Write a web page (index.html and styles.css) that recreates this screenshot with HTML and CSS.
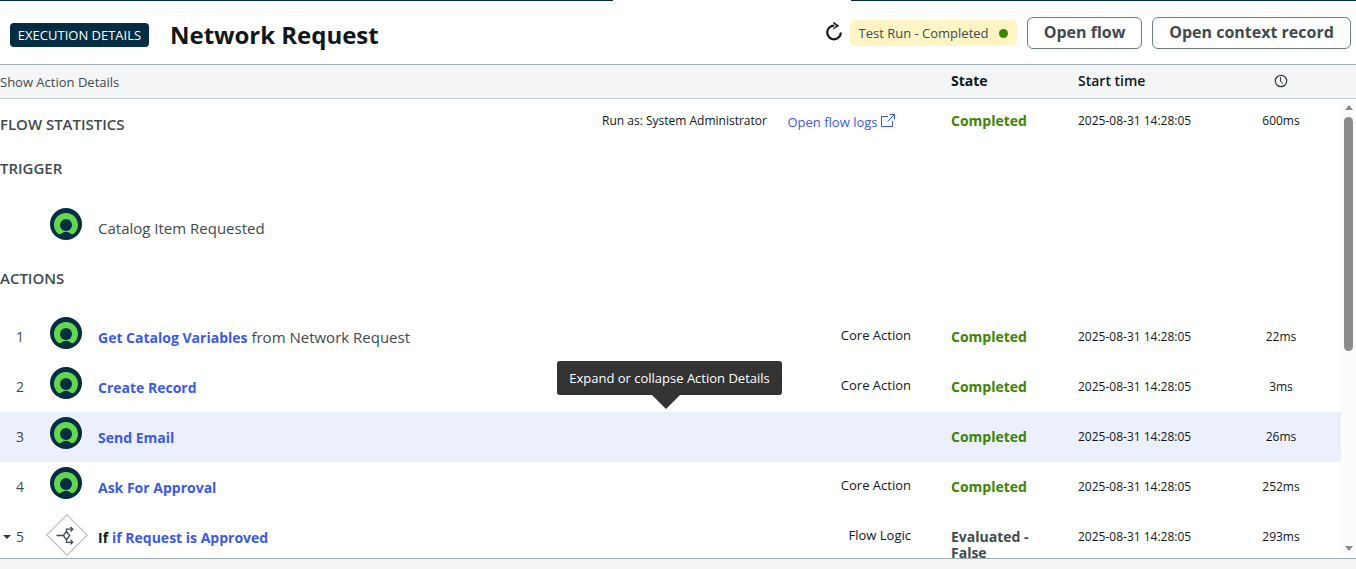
FILE: index.html
```html
<!DOCTYPE html>
<html lang="en">
<head>
<meta charset="utf-8">
<title>Execution Details</title>
<link rel="stylesheet" href="styles.css">
</head>
<body>
<svg class="defs" width="0" height="0" aria-hidden="true">
  <symbol id="logo" viewBox="0 0 32 32">
    <circle cx="16" cy="16" r="16" fill="#032d42"/>
    <path d="M16 5C9.200 5 4 10.200 4 16.900c0 3.300 1.500 6.400 3.900 8.600.9.800 2.200.9 3.200.2a8 8 0 0 1 9.800 0c1 .7 2.300.6 3.200-.2 2.400-2.200 3.900-5.300 3.900-8.600C28 10.200 22.800 5 16 5Z" fill="#62d84e"/>
    <circle cx="16" cy="17" r="6" fill="#032d42"/>
  </symbol>
</svg>
<div class="page">
  <div class="strip"><span class="strip-left"></span><span class="strip-right"></span></div>
  <header class="header">
    <span class="badge">EXECUTION DETAILS</span>
    <h1 class="title">Network Request</h1>
    <div class="tools">
      <svg class="refresh" width="18" height="20" viewBox="0 0 18 20"><path d="M9.300 3.700A6.800 6.800 0 1 0 15.800 10.500" fill="none" stroke="#10171c" stroke-width="2.200"/><path d="M8.500 0v1.300l3 2.500-3 2.500v.7L14 3.800Z" fill="#10171c" stroke="#10171c" stroke-width=".5"/></svg>
      <span class="status">Test Run - Completed<i class="dot"></i></span>
      <button class="btn btn-flow">Open flow</button>
      <button class="btn btn-record">Open context record</button>
    </div>
  </header>
  <div class="grid thead">
    <span class="toggle">Show Action Details</span>
    <span class="th state-head">State</span>
    <span class="th start-head">Start time</span>
    <span class="clock"><svg width="14" height="14" viewBox="0 0 14 14" fill="none" stroke="#303a3f"><circle cx="7" cy="7" r="5.700" stroke-width="1.200"/><path d="M6.500 3v4.500L9 9.500"/></svg></span>
  </div>
  <main class="body">
    <div class="list">
      <div class="grid stats">
        <h2 class="section">FLOW STATISTICS</h2>
        <span class="runas">Run as: System Administrator</span>
        <a class="logs">Open flow logs<svg width="14" height="14" viewBox="0 0 14 14" fill="none" stroke="#3c59e7"><path d="M7 2.500H.5v10h11V7M8.500.5h5v5M13.500.5l-7 7"/></svg></a>
        <span class="state">Completed</span><span class="time">2025-08-31 14:28:05</span><span class="dur">600ms</span>
      </div>
      <h2 class="section trigger">TRIGGER</h2>
      <div class="grid row trigger-row"><span></span><svg class="logo"><use href="#logo"/></svg><span class="name">Catalog Item Requested</span></div>
      <h2 class="section actions">ACTIONS</h2>
      <div class="grid row"><span class="num">1</span><svg class="logo"><use href="#logo"/></svg><span class="name"><b>Get Catalog Variables</b> <span class="from">from Network Request</span></span><span class="type">Core Action</span><span class="state">Completed</span><span class="time">2025-08-31 14:28:05</span><span class="dur">22ms</span></div>
      <div class="grid row"><span class="num">2</span><svg class="logo"><use href="#logo"/></svg><span class="name"><b>Create Record</b></span><span class="type">Core Action</span><span class="state">Completed</span><span class="time">2025-08-31 14:28:05</span><span class="dur">3ms</span></div>
      <div class="grid row hover"><span class="num">3</span><svg class="logo"><use href="#logo"/></svg><span class="name"><b>Send Email</b></span><span class="type"></span><span class="state">Completed</span><span class="time">2025-08-31 14:28:05</span><span class="dur">26ms</span><div class="tooltip">Expand or collapse Action Details</div></div>
      <div class="grid row"><span class="num">4</span><svg class="logo"><use href="#logo"/></svg><span class="name"><b>Ask For Approval</b></span><span class="type">Core Action</span><span class="state">Completed</span><span class="time">2025-08-31 14:28:05</span><span class="dur">252ms</span></div>
      <div class="grid row"><span class="num"><i class="caret"></i>5</span>
        <svg class="branch" width="42" height="42" viewBox="0 0 42 42" fill="none"><path d="M21 .8 41.200 21 21 41.200.8 21Z" fill="#fff" stroke="#b9c1c5" stroke-width="1.200"/><g stroke="#3c4a50" stroke-width="1.300"><path d="M10.500 21.500H17M20.500 17.300l3.200 4.200-3.200 4.200-3.200-4.200ZM20.500 17.300v-2.100h6M20.500 25.700v2.600h6M24.500 13l2.300 2.200-2.300 2.300M24.500 25.900l2.300 2.300-2.300 2.200"/></g></svg>
        <span class="name"><strong>If</strong> <b>if Request is Approved</b></span><span class="type">Flow Logic</span><span class="state evaluated">Evaluated - False</span><span class="time">2025-08-31 14:28:05</span><span class="dur">293ms</span></div>
    </div>
    <div class="scrollbar"><i class="up"></i><i class="thumb"></i><i class="down"></i></div>
  </main>
</div>
</body>
</html>
```
FILE: styles.css
```css
* { box-sizing: border-box; }
body { margin: 0; background: #f4f5f7; color: #10171c; font: 13px "Open Sans", sans-serif; overflow: hidden; }
.defs { position: absolute; }
.page { width: 1356px; height: 569px; display: flex; flex-direction: column; }
.strip { height: 1px; display: flex; justify-content: space-between; background: #fff; }
.strip-left { width: 613px; background: #032d42; }
.strip-right { width: 505px; background: #032d42; }
.header { height: 64px; display: flex; align-items: flex-start; padding-left: 10px; background: #fff; border-bottom: 1px solid #a2adb3; white-space: nowrap; }
.badge { width: 139px; height: 24px; margin-top: 22px; border-radius: 4px; background: #032d42; color: #fff; font-size: 13px; line-height: 24px; text-align: center; }
.title { margin: 17px 0 0 21px; font-size: 24px; line-height: 34px; font-weight: 700; letter-spacing: -.03px; }
.tools { margin-left: auto; padding-right: 5px; display: flex; align-items: flex-start; }
.refresh { margin: 21px 7px 0 0; }
.status { width: 167px; height: 26px; margin: 19px 10px 0 0; padding: 0 9px 0 8.5px; display: flex; align-items: center; justify-content: space-between; background: #fff5c4; border-radius: 5px; color: #3f4a4f; font-size: 13px; }
.dot { width: 9px; height: 9px; border-radius: 50%; background: #3d8500; }
.btn { height: 32px; margin: 16px 0 0; padding: 0 0 2px; border: 1px solid #6b7a81; border-radius: 6px; background: #fff; color: #3f4a4f; font: 700 16px "Open Sans", sans-serif; }
.btn-flow { width: 115px; margin-right: 10px; }
.btn-record { width: 199px; }
.grid { display: grid; grid-template-columns: 50px 48px 1fr 120px 40px 127px 143px 120px; white-space: nowrap; width: 1341px; }
.thead { width: 1356px; height: 34px; padding-right: 15px; border-bottom: 1px solid #cbd2d5; background: #f4f5f7; line-height: 34px; }
.toggle { grid-column: 1 / 4; color: #3f4a4f; }
.th { font-size: 14px; line-height: 32px; }
.state-head { grid-column: 6; font-weight: 700; }
.start-head { font-weight: 600; }
.clock { display: flex; align-items: center; justify-content: center; padding-bottom: 2px; }
.body { height: 460px; display: flex; background: #fff; border-bottom: 1px solid #a2adb3; overflow: hidden; }
.list { width: 1341px; }
.stats { grid-template-columns: 602px 185px 164px 127px 143px 120px; height: 44px; line-height: 44px; }
.section { margin: 0; font-size: 15px; font-weight: 600; color: #3f4a4f; line-height: 50px; letter-spacing: -.02px; }
.runas { font-size: 12px; }
.logs { display: flex; align-items: flex-start; gap: 3px; padding-left: .5px; line-height: 47px; color: #3c59e7; }
.logs svg { margin-top: 15px; }
.state { grid-column: 6; font-size: 14px; font-weight: 700; color: #3d8500; }
.stats .state { grid-column: auto; }
.time { font-size: 12px; }
.dur { text-align: center; font-size: 12px; }
.trigger { height: 60px; }
.row { position: relative; height: 50px; line-height: 50px; }
.num { position: relative; width: 40px; text-align: center; font-size: 14px; color: #3f4a4f; }
.logo { width: 32px; height: 32px; margin-top: 5px; }
.name { font-size: 15px; line-height: 50px; color: #3f4a4f; }
.name b { font-size: 14px; font-weight: 700; color: #3c59e7; }
.name strong { font-size: 14px; color: #10171c; }
.actions { height: 59px; }
.type { text-align: right; line-height: 47px; }
.row .type { font-size: 13px; }
.hover { background: #ecf0fd; }
.evaluated { color: #3f4a4f; line-height: 16px; padding: 17px 27px 0 0; white-space: normal; }
.caret { position: absolute; left: 3px; top: 23px; border: 4px solid transparent; border-top: 4px solid #303a3f; border-bottom: 0; }
.branch { margin: 2px 0 0 -4px; }
.tooltip { position: absolute; left: 557px; top: -51px; width: 225px; height: 34px; border-radius: 3px; background: #333; color: #fff; font-size: 13px; line-height: 34px; text-align: center; }
.tooltip::after { content: ""; position: absolute; left: 95px; top: 34px; border: 14px solid transparent; border-top-color: #333; border-bottom: 0; }
.scrollbar { width: 15px; background: #fcfcfc; display: flex; flex-direction: column; align-items: center; padding: 6px 0 7px; }
.up { border: 4.5px solid transparent; border-bottom: 5px solid #8b8b8b; border-top: 0; }
.thumb { width: 9px; height: 234px; margin-top: 7px; border-radius: 5px; background: #8b8b8b; }
.down { margin-top: auto; border: 4.5px solid transparent; border-top: 5px solid #8b8b8b; border-bottom: 0; }
```
